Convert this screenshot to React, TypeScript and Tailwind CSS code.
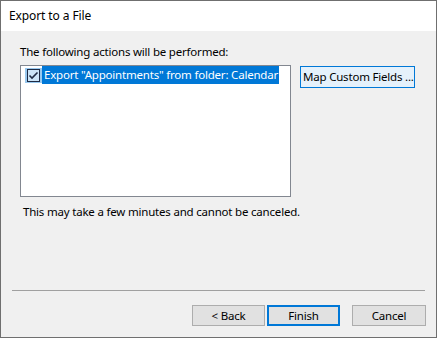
export default function App() {
  return (
    <div className="w-[437px] h-[338px] border border-[#6f6f6f] bg-[#f0f0f0] flex flex-col text-[11.5px] tracking-[-0.2px] text-black font-['Noto_Sans',sans-serif] leading-[16px]">
      {/* Title bar */}
      <div className="h-[30px] bg-white flex items-center pl-[8px] text-[12px] tracking-[-0.1px]">Export to a File</div>

      {/* Body */}
      <div className="flex-1 flex flex-col pt-[13px]">
        <div className="pl-[19px]">The following actions will be performed:</div>

        <div className="flex mt-[5px] pl-[19px]">
          <div className="w-[271px] h-[132px] border border-[#828790] bg-white pl-[4px]">
            <div className="flex h-[18px] items-center">
              <div className="w-[17px] h-[15px] bg-[#99c9ef] flex items-center justify-center">
                <svg width="13" height="13" viewBox="0 0 13 13">
                  <rect x="0.5" y="0.5" width="12" height="12" fill="#cce4f7" stroke="#1f2b44" />
                  <path d="M2.5 6.5 L5 9 L10.5 3.5" fill="none" stroke="#1f2b44" strokeWidth="1.6" />
                </svg>
              </div>
              <div className="h-[18px] w-[237px] bg-[#0078d7] text-white flex items-center pl-[2px] whitespace-nowrap overflow-hidden">
                Export "Appointments" from folder: Calendar
              </div>
            </div>
          </div>
          <button className="ml-[9px] mt-[1px] w-[115px] h-[22px] border border-[#0078d7] bg-[#e5f1fb] text-left pl-[2px] whitespace-nowrap overflow-hidden">
            Map Custom Fields ...
          </button>
        </div>

        <div className="pl-[22px] mt-[7px]">This may take a few minutes and cannot be canceled.</div>

        {/* Separator and buttons */}
        <div className="mt-auto mx-[11px] border-t border-[#a0a0a0]"></div>
        <div className="flex justify-end pr-[10px] pt-[14px] pb-[11px]">
          <button className="w-[73px] h-[21px] border border-[#adadad] bg-[#e1e1e1] text-center">&lt; Back</button>
          <button className="ml-[2px] w-[73px] h-[21px] border-2 border-[#0078d7] bg-[#e1e1e1] text-center">Finish</button>
          <button className="ml-[12px] w-[74px] h-[21px] border border-[#adadad] bg-[#e1e1e1] text-center">Cancel</button>
        </div>
      </div>
    </div>
  );
}
